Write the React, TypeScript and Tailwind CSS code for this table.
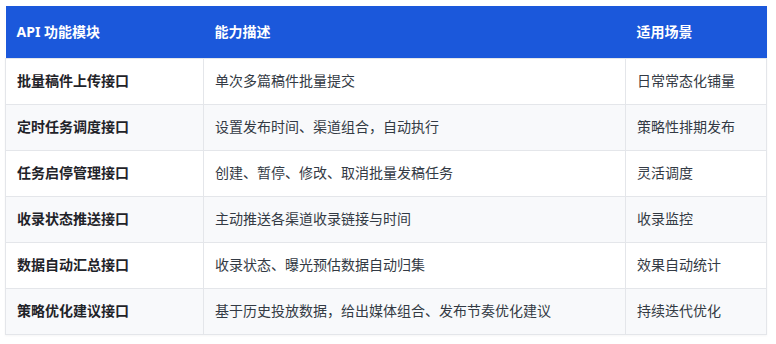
const rows = [
  ["批量稿件上传接口", "单次多篇稿件批量提交", "日常常态化铺量"],
  ["定时任务调度接口", "设置发布时间、渠道组合，自动执行", "策略性排期发布"],
  ["任务启停管理接口", "创建、暂停、修改、取消批量发稿任务", "灵活调度"],
  ["收录状态推送接口", "主动推送各渠道收录链接与时间", "收录监控"],
  ["数据自动汇总接口", "收录状态、曝光预估数据自动归集", "效果自动统计"],
  ["策略优化建议接口", "基于历史投放数据，给出媒体组合、发布节奏优化建议", "持续迭代优化"],
];

export default function App() {
  return (
    <div
      className="min-h-screen bg-white pl-[5px] pt-[6px]"
      style={{ fontFamily: '"Noto Sans", "Noto Sans CJK SC", sans-serif' }}
    >
      <table className="w-[762px] border-collapse text-sm shadow-[0_1px_2px_rgba(0,0,0,0.04)]">
        <thead>
          <tr className="h-[52px] bg-[#1b58db] text-left text-white">
            <th className="w-[198px] px-[11px] font-bold">API 功能模块</th>
            <th className="w-[422px] px-[11px] font-bold">能力描述</th>
            <th className="px-[11px] font-bold">适用场景</th>
          </tr>
        </thead>
        <tbody>
          {rows.map((r, i) => (
            <tr key={i} className={i % 2 === 1 ? "h-[46px] bg-[#f8f9fb]" : "h-[46px] bg-white"}>
              <td className="border border-[#e4e6ea] px-[11px] font-bold text-[#1f2329]">{r[0]}</td>
              <td className="border border-[#e4e6ea] px-[11px] text-[#333a44]">{r[1]}</td>
              <td className="border border-[#e4e6ea] px-[11px] text-[#333a44]">{r[2]}</td>
            </tr>
          ))}
        </tbody>
      </table>
    </div>
  );
}
